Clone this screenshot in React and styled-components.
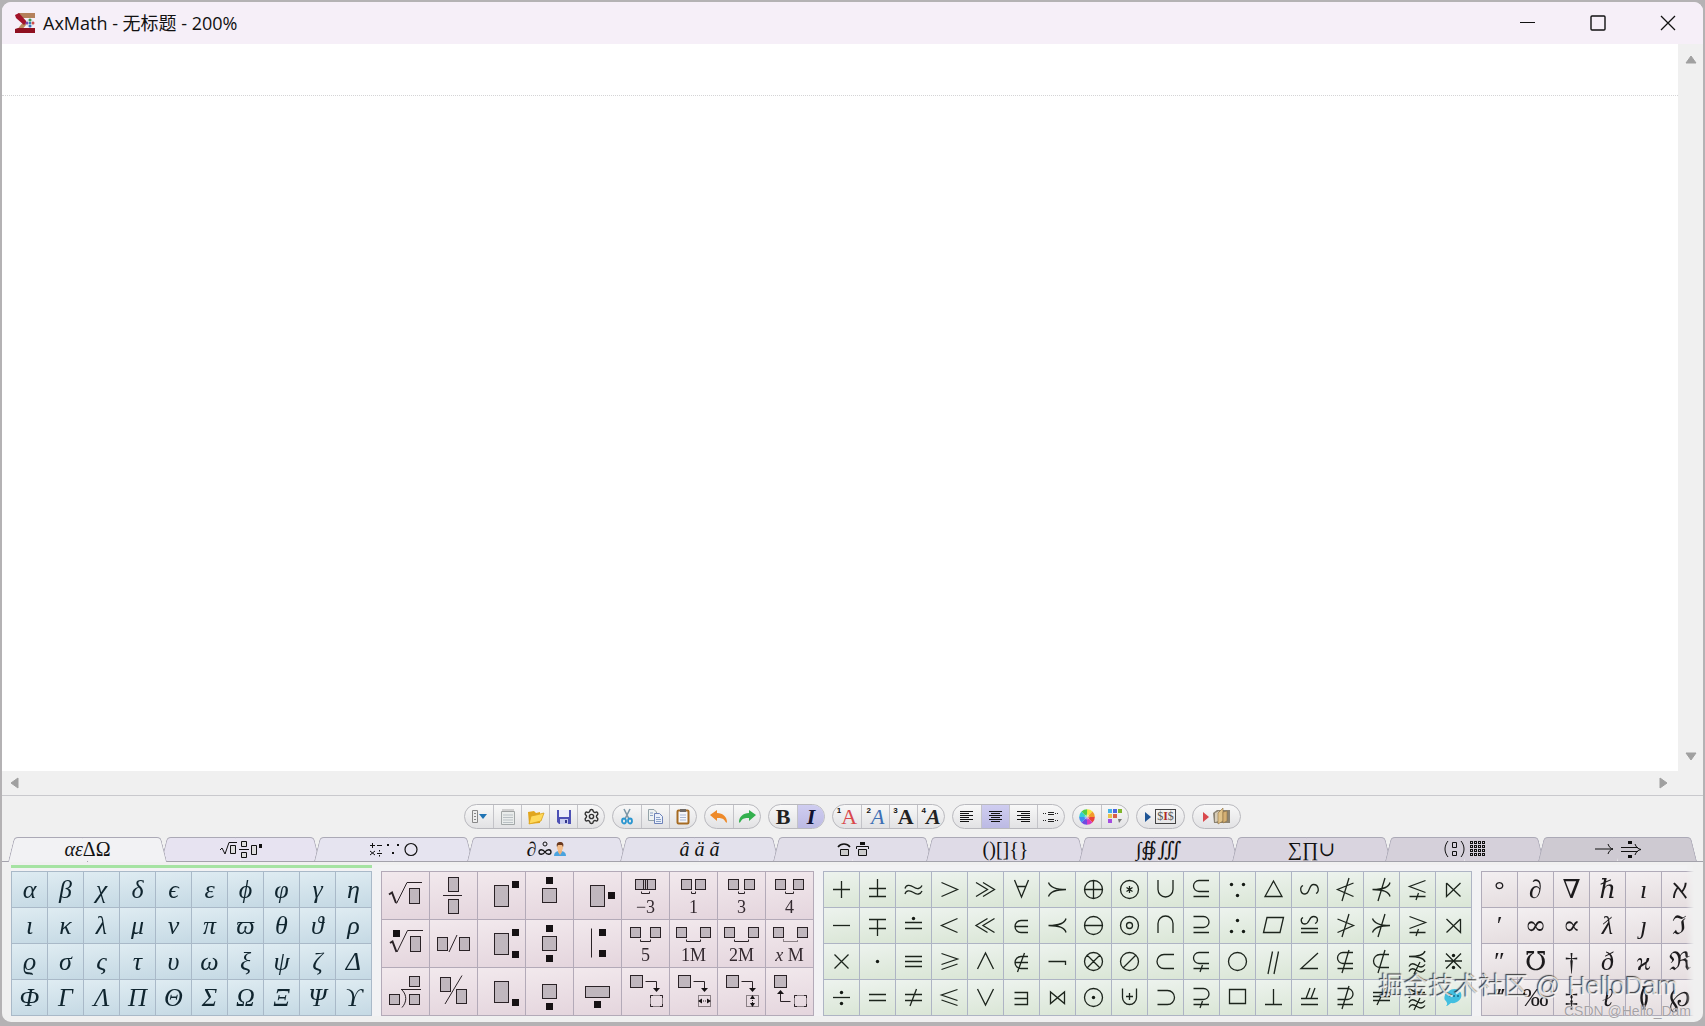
import styled, { createGlobalStyle, css } from "styled-components"
import { Settings } from "lucide-react"

const GlobalStyle = createGlobalStyle`
    * {
        box-sizing: border-box;
    }
    body {
        margin: 0;
        background-color: #b4b2b4;
        font-family: "Open Sans", "Noto Sans CJK SC", sans-serif;
    }
    button {
        border: none;
        padding: 0;
        margin: 0;
        background: none;
        color: inherit;
        font: inherit;
        cursor: pointer;
    }
    svg {
        display: block;
    }
`

const Desktop = styled.div`
    height: 100vh;
    padding: 2px 2px 4px;
`
const Window = styled.div`
    height: 100%;
    position: relative;
    display: flex;
    flex-direction: column;
    overflow: hidden;
    border-radius: 9px;
    background-color: #f0f0f0;
`

/* title bar */
const TitleBar = styled.header`
    height: 42px;
    flex: none;
    display: flex;
    align-items: center;
    justify-content: space-between;
    background-color: #f6eff8;
`
const Title = styled.h1`
    margin: 0;
    padding-left: 13px;
    display: flex;
    align-items: center;
    gap: 8px;
    font-size: 18px;
    font-weight: 400;
    line-height: 24px;
    color: #111;
`
const WindowButtons = styled.div`
    display: flex;
    height: 100%;
`
const WindowButton = styled.button`
    width: 70px;
    display: flex;
    align-items: center;
    justify-content: center;
`

/* editor */
const EditorArea = styled.div`
    flex: 1;
    min-height: 0;
    display: grid;
    grid-template-columns: 1fr 25px;
    grid-template-rows: 1fr 24px;
    border-bottom: 1px solid #c9c9cd;
`
const Sheet = styled.main`
    display: flex;
    flex-direction: column;
    background-color: white;
`
const HeaderLine = styled.div`
    height: 52px;
    flex: none;
    border-bottom: 1px dotted #d4d4d6;
`
const Editor = styled.textarea`
    flex: 1;
    border: none;
    outline: none;
    resize: none;
    padding: 8px;
    background: none;
    font: 28px "Liberation Serif", serif;
`
const VerticalBar = styled.div`
    display: flex;
    flex-direction: column;
    align-items: center;
    justify-content: space-between;
    padding: 10px 0 9px;
`
const HorizontalBar = styled.div`
    display: flex;
    align-items: center;
    justify-content: space-between;
    padding: 0 10px 0 8px;
`

/* toolbar */
const Toolbar = styled.div`
    flex: none;
    display: flex;
    justify-content: center;
    gap: 7px;
    padding: 8px 0;
`
const Group = styled.div`
    height: 25px;
    display: flex;
    overflow: hidden;
    border: 1px solid #b9b9be;
    border-radius: 13px;
    background: linear-gradient(#f8f8f8, #e2e2e4);
`
const Tool = styled.button`
    width: ${(props) => (props.$wide ? 47 : 28)}px;
    display: flex;
    align-items: center;
    justify-content: center;
    background: ${(props) => (props.$on ? "linear-gradient(#cfcdf0, #bcbae4)" : "none")};

    & + & {
        border-left: 1px solid #c3c3c8;
    }
    &:last-child:not(:only-child) {
        width: 27px;
    }
`
const Letter = styled.span`
    display: flex;
    align-items: center;
    font-family: "Liberation Serif", serif;
    font-size: 22px;
    line-height: 23px;
    font-weight: ${(props) => (props.$bold ? 700 : 400)};
    font-style: ${(props) => (props.$italic ? "italic" : "normal")};
    color: ${(props) => props.$color || "#222"};
`
const Index = styled.sup`
    align-self: flex-start;
    font: 700 8px/12px "Liberation Sans", sans-serif;
    color: #111;
`

/* tabs */
const Tabs = styled.div`
    flex: none;
    height: 25px;
    display: flex;
    padding: 0 9px;
    border-bottom: 1px solid #a3a2ab;
`
const half = css`
    content: "";
    position: absolute;
    z-index: -1;
    top: 0;
    bottom: ${(props) => (props.$active ? "-1px" : "0")};
    width: 51%;
    border-top: 1px solid #aba9b6;
    background-color: ${(props) => props.$tone};
`
const Tab = styled.button`
    flex: 1;
    position: relative;
    z-index: ${(props) => (props.$active ? 1 : 0)};
    display: flex;
    align-items: center;
    justify-content: center;
    gap: 2px;
    font-family: "Liberation Serif", "DejaVu Serif", serif;
    font-size: 20px;
    line-height: 24px;
    color: #111;

    &::before {
        ${half}
        left: 0;
        border-left: 1px solid #aba9b6;
        border-top-left-radius: 4px;
        transform: skewX(-14deg);
    }
    &::after {
        ${half}
        right: 0;
        border-right: 1px solid #aba9b6;
        border-top-right-radius: 4px;
        transform: skewX(14deg);
    }
`
const Italic = styled.em`
    font-style: italic;
    white-space: pre;
`

/* symbol palettes */
const PaletteArea = styled.div`
    flex: none;
    margin: 3px 9px 6px;
    overflow: hidden;
    background-color: #f2f2f4;
    mask-image: linear-gradient(to left, transparent, #000 8px);
`
const Marker = styled.div`
    width: 361px;
    height: 3px;
    margin-bottom: 3px;
    background-color: #a5e3a2;
`
const Palettes = styled.div`
    display: flex;
    gap: 9px;
`
const Palette = styled.div`
    flex: none;
    display: grid;
    grid-template-columns: repeat(${(props) => props.$cols}, ${(props) => props.$cell}px);
    grid-auto-rows: ${(props) => props.$cell}px;
    gap: 1px;
    padding: 1px;
    background-color: ${(props) => props.$line};
`
const Cell = styled.button`
    display: flex;
    flex-direction: column;
    align-items: center;
    overflow: hidden;
    background: linear-gradient(170deg, ${(props) => props.$from}, ${(props) => props.$to});
`
const Glyph = styled.span`
    font-family: ${(props) => (props.$wide ? "" : "\"Liberation Serif\", ")}"DejaVu Serif", serif;
    font-size: 26px;
    line-height: 35px;
    font-style: ${(props) => (props.$italic ? "italic" : "normal")};
    color: ${(props) => props.$color || "#10252f"};
`
const SpaceLabel = styled.span`
    font-family: "Liberation Serif", serif;
    font-size: 18px;
    line-height: 23px;
    color: #33292f;
`

const Watermark = styled.div`
    position: absolute;
    right: 12px;
    bottom: 3px;
    display: flex;
    flex-direction: column;
    align-items: flex-end;
    pointer-events: none;
`
const MarkName = styled.span`
    padding-right: 13px;
    font-family: "Liberation Sans", "Noto Sans CJK SC", sans-serif;
    font-size: 25px;
    line-height: 34px;
    color: rgba(255, 255, 255, 0.75);
    text-shadow: -1px -1px 1px rgba(40, 40, 40, 0.9);
`
const MarkSource = styled.span`
    font-family: "Liberation Sans", sans-serif;
    font-size: 14px;
    line-height: 16px;
    color: #a5a2a5;
    text-shadow: 0 0 1px white;
`

const greek = "αβχδϵεϕφγηικλμνπϖθϑρϱσςτυωξψζΔΦΓΛΠΘΣΩΞΨϒ"

const others = [
  "°", "∂", "∇", "ℏ", "ı", "ℵ",
  "′", "∞", "∝", "ƛ", "ȷ", "ℑ",
  "″", "℧", "†", "ð", "ϰ", "ℜ",
  "‴", "‰", "‡", "ℓ", "≬", "℘",
]
const slanted = "∂ℏıƛȷðϰℓ"
const wideGlyphs = "∞∝"

const ring = "M8.5 17.5a9 9 0 1 0 18 0a9 9 0 1 0 -18 0"
const slash = "M14 29L21 6"
const subset = "M25 8.5H15a5.5 5.5 0 0 0 0 11H25"
const superset = "M9.5 8.5H19.5a5.5 5.5 0 0 1 0 11H9.5"
const member = "M24 12.5H17a6 6 0 0 0 0 12H24M11 18.5H24"
const prec = "M26 10.5C25 15 19 17.5 8.5 17.5C19 17.5 25 20 26 24.5"
const succ = "M8.5 10.5C10 15 16 17.5 26 17.5C16 17.5 10 20 8.5 24.5"
const waves = "M9 22.5c2-4 5-3 8-1s6 2 8-1M9 27.5c2-4 5-3 8-1s6 2 8-1"

// every operator is a thin stroke (d) with optional dots, on a 35 x 35 field
const operators = [
  { d: "M9 17.5H26M17.5 9V26" },
  { d: "M17.5 7V24.5M9 16.5H26M9 24.5H26" },
  { d: "M9 16.5c1-4 5-4 8.5-1.5s7 2 8.5-1.5M9 22c1-4 5-4 8.5-1.5s7 2 8.5-1.5" },
  { d: "M9.5 10.5L25.5 17.5L9.5 24.5" },
  { d: "M8 10.5L19.5 17.5L8 24.5M15 10.5L26.5 17.5L15 24.5" },
  { d: "M10.5 8L17.5 25L24.5 8M13 14.5H22" },
  { d: succ },
  { d: ring + "M8.5 17.5H26.5M17.5 8.5V26.5" },
  { d: ring + "M17.5 14V21M14.5 15.5L20.5 19.5M20.5 15.5L14.5 19.5" },
  { d: "M10 8V17.5a7.5 7.5 0 0 0 15 0V8" },
  { d: subset + "M9.5 24.5H25" },
  { dots: [[11, 12], [23, 12], [17, 23]] },
  { d: "M17.5 9L9 24.5H26Z" },
  { d: "M11 13.5C7.500 15 8 22 13 22C18 22 16.5 12.5 21.5 12.5C27 12.5 27.5 20 24 21.5" },
  { d: "M25.5 11L9.5 17.5L25.5 24.5" + slash },
  { d: prec + slash },
  { d: "M25.5 8.5L9.5 14.5L25.5 20.5M9.5 24.5H25.5M16 28L18.5 21" },
  { d: "M10.5 11V24.5L24.5 11M10.5 11L24.5 24.5" },

  { d: "M9 17.5H26" },
  { d: "M9 11.5H26M9 20.5H26M17.5 11.5V28" },
  { d: "M9 14.5H26M9 20.5H26", dots: [[17, 10]] },
  { d: "M25.5 10.5L9.5 17.5L25.5 24.5" },
  { d: "M19.5 10.5L8 17.5L19.5 24.5M26.5 10.5L15 17.5L26.5 24.5" },
  { d: member },
  { d: prec },
  { d: ring + "M8.5 17.5H26.5" },
  { d: ring + "M14.5 17.5a3 3 0 1 0 6 0a3 3 0 1 0 -6 0" },
  { d: "M10 25V15.5a7.5 7.5 0 0 1 15 0V25" },
  { d: superset + "M9.5 24.5H25" },
  { dots: [[17, 12], [11, 23], [23, 23]] },
  { d: "M11 9.5H27.5L24 24.5H7.5Z" },
  { d: "M11 9.5C8 11 9 16 13 16C18 16 16.5 8.5 21.5 8.5C26.5 8.5 26.5 14 23 15.5M9 20.5H26M9 24.5H26" },
  { d: "M9.5 11L25.5 17.5L9.5 24.5" + slash },
  { d: succ + slash },
  { d: "M9.5 8.5L25.5 14.5L9.5 20.5M9.5 24.5H25.5M16 28L18.5 21" },
  { d: "M24.5 11V24.5L10.5 11M24.5 11L10.5 24.5" },

  { d: "M10.5 10.5L24.5 24.5M24.5 10.5L10.5 24.5" },
  { dots: [[17, 17]] },
  { d: "M9 12.5H26M9 17.5H26M9 22.5H26" },
  { d: "M9.5 9.5L25.5 15L9.5 20.5M25.5 20L9.5 25.5" },
  { d: "M9.5 25L17.5 9L25.5 25" },
  { d: member + "M13.5 28L20.5 9" },
  { d: "M8.5 17.5H25.5V21" },
  { d: ring + "M11 11L24 24M24 11L11 24" },
  { d: ring + "M24 11L11 24" },
  { d: "M26 10.5H16a7 7 0 0 0 0 14H26" },
  { d: subset + "M9.5 24.5H25M16 28L18.5 21" },
  { d: ring },
  { d: "M16.5 7.5L12 30M22.5 7.5L18 30" },
  { d: "M26 9L9 24.5H26" },
  { d: subset + "M9.5 24.5H25" + slash },
  { d: "M25 10.5H16a6.5 6.5 0 0 0 0 13H25" + slash },
  { d: "M25 7C24 11 19 12.5 9 12.5C19 12.5 24 14 25 18" + waves + "M14 30L20 18" },
  { d: "M10 9.5L25 24.5M25 9.5L10 24.5M9 17H26", dots: [[17, 11], [17, 23]] },

  { d: "M9 17.5H26", dots: [[17, 12], [17, 23]] },
  { d: "M9 14.5H26M9 20.5H26" },
  { d: "M9 14.5H26M9 20.5H26M14 26L20.5 9" },
  { d: "M25.5 9.5L9.5 15L25.5 20.5M9.5 20L25.5 25.5" },
  { d: "M9.5 9L17.5 25L25.5 9" },
  { d: "M10.5 12.5H23.5V24.5H10.5M10.5 18.5H23.5" },
  { d: "M10.5 12V23.5L24.5 12V23.5Z" },
  { d: ring, dots: [[17, 17]] },
  { d: "M10.5 8.5V17.5a7 7 0 0 0 14 0V8.5M14 16.5H21M17.5 13V20" },
  { d: "M9.5 10.5H19.5a7 7 0 0 1 0 14H9.5" },
  { d: superset + "M9.5 24.5H25M16 28L18.5 21" },
  { d: "M9.5 9.5H25.5V23.5H9.5Z" },
  { d: "M17.5 9V24.5M9 24.5H26" },
  { d: "M9 18.5H26M9 24.5H26M14 18.5L18 8M19 18.5L23 8" },
  { d: superset + "M9.5 24.5H25" + slash },
  { d: "M9 12.5H26M9 16.5H26M9 20.5H26M13 25L21 8" },
  { d: "M9 7C10 11 15 12.5 25 12.5C15 12.5 10 14 9 18" + waves + "M14 30L20 18" },
  { bird: true },
]

const Operator = ({ item }) => (
  <svg width="35" height="35" viewBox="0 0 35 35" fill="none" stroke="#1c241c" strokeWidth="1.3">
    {item.d && <path d={item.d} />}
    {item.dots && item.dots.map(([x, y]) => <circle key={x + "-" + y} cx={x + 0.5} cy={y + 0.5} r="1.7" fill="#141a14" stroke="none" />)}
    {item.bird && (
      <g stroke="none">
        <path d="M9 15C10 11 12 13 13 11C16 8 23 8 25 13C27 19 21 24 15 23C13 24 12 26 10 26C12 24 11 23 10 21C8 20 8 17 9 15Z" fill="#42bfe0" />
        <path d="M13 15h2v2h-2zM17 15h2v2h-2zM21 15h2v2h-2z" fill="#1d7fa0" />
      </g>
    )}
  </svg>
)

// boxes are placeholders, marks are the small filled squares
const templates = [
  { d: "M14.5 31.5L25 10.5H40", thick: "M7 22.5L10 20.5L14 31", boxes: [[27, 16, 10, 15]] },
  { d: "M13 23.5H32", boxes: [[18, 5, 10, 14], [18, 27, 10, 14]] },
  { boxes: [[16, 13, 14, 21]], marks: [[34, 9]] },
  { boxes: [[16, 16, 14, 14]], marks: [[20, 5]] },
  { boxes: [[16, 13, 14, 21]], marks: [[34, 20]] },
  { d: "M21.5 7V17M23.5 7V17M25.5 7V17M19.5 19.5V21.5H27.5V19.5", boxes: [[13, 7, 10, 10], [23, 7, 10, 10]], label: "−3" },
  { gap: [11, 25], label: "1" },
  { gap: [10, 26], label: "3" },
  { gap: [9, 27], label: "4" },

  { d: "M15 32L25.5 10.5H41", thick: "M8 23L10.5 21.5L14.5 32", boxes: [[28, 16, 10, 15]], marks: [[11, 10]] },
  { d: "M19 32L27 15", boxes: [[7, 17, 10, 13], [29, 17, 10, 13]] },
  { boxes: [[16, 13, 14, 21]], marks: [[34, 9], [34, 31]] },
  { boxes: [[16, 16, 14, 14]], marks: [[20, 5], [20, 35]] },
  { d: "M17.5 8.5V37.5", marks: [[25, 9], [25, 30]] },
  { gap: [8, 28], label: "5" },
  { gap: [6, 30], label: "1M" },
  { gap: [6, 30], label: "2M" },
  { gap: [7, 31], dotted: true, label: <><i>x</i> M</> },

  { d: "M19 21.5H39M20 22C25 27 25 34 20 39.5", boxes: [[27, 8, 10, 10], [7, 26, 10, 10], [27, 26, 10, 10]] },
  { d: "M15 36L32 7.5", boxes: [[10, 9, 10, 14], [26, 21, 10, 14]] },
  { boxes: [[16, 13, 14, 21]], marks: [[34, 31]] },
  { boxes: [[16, 16, 14, 14]], marks: [[20, 35]] },
  { boxes: [[11, 18, 24, 11]], marks: [[20, 33]] },
  { d: "M23.5 13.5H34.5V20", boxes: [[8, 7, 12, 12]], ghost: true, head: "M31 20H38L34.5 24Z" },
  { d: "M23.5 13.5H34.5V20", boxes: [[8, 7, 12, 12]], ghost: true, head: "M31 20H38L34.5 24ZM28 33L32 30.5V35.5ZM41 33L37 30.5V35.5Z", inner: "M31 33H38" },
  { d: "M23.5 13.5H34.5V20", boxes: [[8, 7, 12, 12]], ghost: true, head: "M31 20H38L34.5 24ZM34.5 27L32 31H37ZM34.5 39L32 35H37Z", inner: "M34.5 30V36" },
  { d: "M24.5 33.5H14.5V26", boxes: [[8, 7, 12, 12]], ghost: true, head: "M11 26H18L14.5 22Z" },
]

const Template = ({ item }) => {
  const boxes = item.gap ? item.gap.map((x) => [x, 7, 10, 10]) : item.boxes || []
  const height = item.label ? 24 : 47
  return (
    <svg width="47" height={height} viewBox={`0 0 47 ${height}`} fill="none" stroke="#2a2226" strokeWidth="1">
      {boxes.map(([x, y, w, h]) => (
        <rect key={x + "-" + y} x={x + 0.5} y={y + 0.5} width={w} height={h} fill="#c0b7be" />
      ))}
      {item.d && <path d={item.d} />}
      {item.thick && <path d={item.thick} strokeWidth="2" />}
      {item.gap && (
        <path
          d={`M${item.gap[0] + 10.5} 19.5V21.5H${item.gap[1] + 0.5}V19.5`}
          strokeDasharray={item.dotted ? "1 1" : undefined}
        />
      )}
      {item.marks && item.marks.map(([x, y]) => <rect key={y} x={x} y={y} width="7" height="7" fill="#161214" stroke="none" />)}
      {item.ghost && <rect x="28.5" y="27.5" width="12" height="11" strokeDasharray="1 1" />}
      {item.ghost && !item.inner && <path d="M28.5 30V27.5H31M38 27.5H40.5V30M40.5 36V38.5H38M31 38.5H28.5V36" />}
      {item.inner && <path d={item.inner} strokeDasharray="1 1" />}
      {item.head && <path d={item.head} fill="#161214" stroke="none" />}
    </svg>
  )
}

const Arrow = ({ d, w = 12, h = 12 }) => (
  <svg width={w} height={h} viewBox={`0 0 ${w} ${h}`}>
    <path d={d} fill="#a0a0a0" stroke="#a0a0a0" strokeLinejoin="round" />
  </svg>
)

const Logo = () => (
  <svg width="20" height="20" viewBox="0 0 20 20">
    <path d="M3 0H20V5H6Z" fill="#b5805c" />
    <path d="M5 16L11 9" stroke="#b98a5e" strokeWidth="4" />
    <path d="M0 2L4 0L12 9L9 12L1 5Z" fill="#a3122a" />
    <path d="M0 16L3 15H20V20H0Z" fill="#8f1020" />
    <circle cx="15" cy="10" r="4" fill="#dfe6ea" />
    <circle cx="15" cy="7" r="1.5" fill="#3c9a54" />
    <circle cx="18" cy="10" r="1.5" fill="#d04a4a" />
    <circle cx="15" cy="13" r="1.5" fill="#3b6fc0" />
    <circle cx="12" cy="10" r="1.5" fill="#7a4ab0" />
    <circle cx="15" cy="10" r="1.2" fill="#2b7fae" />
  </svg>
)

const ListIcon = () => (
  <svg width="18" height="15" viewBox="0 0 18 15">
    <path d="M2.5 1.5H7.5V13.5H2.5Z" fill="#eee" stroke="#888" />
    <path d="M4 4.5H6M4 7.5H6M4 10.5H6" stroke="#888" />
    <path d="M9 5H17L13 10Z" fill="#1f73b4" />
  </svg>
)
const NoteIcon = () => (
  <svg width="16" height="18" viewBox="0 0 16 18">
    <path d="M1.5 3.5H14.5V16.5H1.5Z" fill="#e9eceb" stroke="#a3a8a8" />
    <path d="M3 1V4M5 1V4M7 1V4M9 1V4M11 1V4M13 1V4" stroke="#999" strokeWidth=".8" />
    <path d="M3 7H13M3 9.5H13M3 12H13M3 14.5H13" stroke="#b9c0c4" />
  </svg>
)
const FolderIcon = () => (
  <svg width="18" height="16" viewBox="0 0 18 16">
    <path d="M1 3L7 2L9 4L13 3V14L2 15Z" fill="#e2a61d" />
    <path d="M4 7L9 6L17 4L14 12L2 15Z" fill="#ffd95a" stroke="#d9a11c" strokeWidth=".8" />
  </svg>
)
const SaveIcon = () => (
  <svg width="16" height="16" viewBox="0 0 16 16">
    <path d="M1 1H15V15H3L1 13Z" fill="#4d51b5" />
    <path d="M3 1H13V8H3Z" fill="#eceefa" />
    <path d="M4 10H12V15H4Z" fill="#c9cdee" />
    <path d="M9 11H11V14H9Z" fill="#33378a" />
  </svg>
)
const CutIcon = () => (
  <svg width="14" height="17" viewBox="0 0 14 17" fill="none">
    <path d="M4 1L9 11M10 1L5 11" stroke="#7d98a8" strokeWidth="1.6" />
    <ellipse cx="4" cy="13" rx="2" ry="2.5" stroke="#2b96d0" strokeWidth="1.8" />
    <ellipse cx="10" cy="13" rx="2" ry="2.5" stroke="#2b96d0" strokeWidth="1.8" />
  </svg>
)
const CopyIcon = () => (
  <svg width="17" height="17" viewBox="0 0 17 17">
    <path d="M1.5 1.5H7L9.5 4V12.5H1.5Z" fill="#eef2f2" stroke="#94a3a8" />
    <path d="M7.5 5.5H12.5L15.5 8.5V15.5H7.5Z" fill="#eaf0fa" stroke="#6e82b8" />
    <path d="M3 5H6M3 7.5H6M9 9.5H13M9 11.5H14M9 13.5H14" stroke="#8ba2c8" />
  </svg>
)
const PasteIcon = () => (
  <svg width="14" height="17" viewBox="0 0 14 17">
    <rect x="1.5" y="2.5" width="11" height="13" rx="1" fill="#f4f6fa" stroke="#a66b22" strokeWidth="2" />
    <path d="M4 1H10V4H4Z" fill="#6f6a66" />
    <path d="M4 7H10M4 9.5H10M4 12H10" stroke="#a9b7d2" />
  </svg>
)
const Bend = ({ color, flip }) => (
  <svg width="20" height="16" viewBox="0 0 20 16">
    <path
      d="M1 6L8 1V4C14 4 18 8 18 13C18 14 17 14 16 12C14 9 12 9 8 9V12Z"
      fill={color}
      transform={flip ? "translate(20 0) scale(-1 1)" : undefined}
    />
  </svg>
)
const Lines = ({ rows }) => (
  <svg width="14" height="11" viewBox="0 0 14 11">
    {rows.map(([x, w], i) => <rect key={i} x={x} y={i * 2} width={w} height="1" fill="#111" />)}
  </svg>
)
const SpreadIcon = () => (
  <svg width="16" height="12" viewBox="0 0 16 12" stroke="#222" fill="none">
    <path d="M5 1.5H11M5 3.5H11M5 8.5H11M5 10.5H11" />
    <path d="M0 2.5H4M12 2.5H16M0 9.5H4M12 9.5H16" strokeDasharray="1 1" />
  </svg>
)
const wheel = ["#f2e53a", "#f39a2a", "#e8433a", "#d63cc0", "#6f4be0", "#3f8cf0", "#34cfd0", "#4fcf45"]
const WheelIcon = () => (
  <svg width="16" height="16" viewBox="-8 -8 16 16">
    {wheel.map((color, i) => (
      <path key={color} d="M0 0L0 -7.8A7.8 7.8 0 0 1 5.6 -5.5Z" fill={color} transform={`rotate(${i * 45})`} />
    ))}
    <circle r="2.5" fill="#fff" opacity=".4" />
  </svg>
)
const SwatchIcon = () => (
  <svg width="15" height="15" viewBox="0 0 15 15">
    <path d="M0 0H4V4H0Z" fill="#45b4e8" />
    <path d="M5 0H9V4H5Z" fill="#4a66e0" />
    <path d="M10 0H14V4H10Z" fill="#7fb52a" />
    <path d="M0 5H4V9H0Z" fill="#e8c34a" />
    <path d="M5 5H9V9H5Z" fill="#d8604a" />
    <path d="M0 10H4V14H0Z" fill="#a54be0" />
    <path d="M10 10H14L11 14Z" fill="#777" />
  </svg>
)
const Play = ({ color }) => (
  <svg width="6" height="12" viewBox="0 0 6 12">
    <path d="M0 1L6 6L0 11Z" fill={color} />
  </svg>
)
const BookIcon = () => (
  <svg width="22" height="17" viewBox="0 0 22 17">
    <path d="M4 5L8 2H21V15H5Z" fill="#8b8373" />
    <path d="M6 5L10 3V13L6 14Z" fill="#d8cdb8" />
    <path d="M9 5L14 0V13L9 16Z" fill="#e2c48a" stroke="#8f7040" strokeWidth=".6" />
    <path d="M14 4L18 3V13L14 15Z" fill="#d4b074" stroke="#8f7040" strokeWidth=".6" />
  </svg>
)
const Code = styled.span`
    margin-left: 4px;
    padding: 0 1px;
    border: 1px solid #444;
    font: 12px/13px "Liberation Serif", serif;
    color: #555;
`
const Cursor = styled.b`
    color: #b02a2a;
`

/* drawings on the tabs */
const RootTabIcon = () => (
  <svg width="44" height="18" viewBox="0 0 44 18" fill="#ddd" stroke="#111">
    <path d="M1 10L3 8L6 14L10 2.5H18" fill="none" />
    <path d="M11.5 5.5H16.5V13.5H11.5ZM22.5 1.5H27.5V6.5H22.5ZM22.5 12.5H27.5V17.5H22.5ZM32.5 5.5H37.5V14.5H32.5Z" />
    <path d="M20 9.5H30" />
    <path d="M40 4H43V8H40Z" fill="#111" stroke="none" />
  </svg>
)
const SignsTabIcon = () => (
  <svg width="48" height="15" viewBox="0 0 48 15" fill="none" stroke="#111">
    <path d="M0 3.5H5M2.5 1V6M7 3.5H12M0 9L5 13M5 9L0 13M7 11.5H12" />
    <path d="M9 8h1v1.5h-1zM9 13h1v1.5h-1zM17 2h2v2h-2zM27 2h2v2h-2zM22 10h2v2h-2z" fill="#111" stroke="none" />
    <circle cx="41" cy="7.5" r="6" strokeWidth="1.2" />
  </svg>
)
const PersonTabIcon = () => (
  <svg width="12" height="14" viewBox="0 0 12 14">
    <path d="M0 14C0 10 3 9 6 9C9 9 12 10 12 14Z" fill="#4aa3df" />
    <path d="M4 7H8V10L6 13L4 10Z" fill="#f0b27a" />
    <ellipse cx="6" cy="5" rx="3" ry="4" fill="#f3bd8a" />
    <path d="M3 5C2 1 4 0 6 0C9 0 10 2 9 5L8 3H4Z" fill="#6b3a1f" />
  </svg>
)
const LoopTabIcon = () => (
  <svg width="14" height="16" viewBox="0 0 14 16" fill="none" stroke="#111">
    <circle cx="7" cy="3" r="2" />
    <path d="M7 11C5 8 1 8 1 11C1 14 5 14 7 11C9 8 13 8 13 11C13 14 9 14 7 11Z" strokeWidth="1.3" />
  </svg>
)
const CoverTabIcon = () => (
  <svg width="32" height="17" viewBox="0 0 32 17" fill="#ccc" stroke="#111">
    <path d="M1 6C4 2 10 2 13 6" fill="none" strokeWidth="1.5" />
    <path d="M3.5 8.5H11.5V14.5H3.5ZM21.5 8.5H29.5V14.5H21.5Z" />
    <path d="M19.5 8V5.5H31.5V8" fill="none" />
    <path d="M23 1H28V4H23Z" fill="#111" stroke="none" />
  </svg>
)
const MatrixTabIcon = () => (
  <svg width="42" height="18" viewBox="0 0 42 18" fill="none" stroke="#111">
    <path d="M4 1C0 6 0 12 4 17M17 1C21 6 21 12 17 17" />
    <path d="M8.5 2.5H12.5V7.5H8.5ZM8.5 11.5H12.5V15.5H8.5Z" />
    {[0, 4, 8, 12].map((y) => [0, 4, 8, 12].map((x) => (
      <rect key={x + "-" + y} x={26.5 + x} y={1.5 + y} width="2" height="2" />
    )))}
  </svg>
)
const ArrowsTabIcon = () => (
  <svg width="48" height="18" viewBox="0 0 48 18" fill="none" stroke="#111">
    <path d="M1 9H19M14 4C15 7 17 9 19 9C17 9 15 11 14 14" />
    <path d="M27 7.5H44M27 11.5H44M41 4C42 7 44 9 47 9.5C44 10 42 12 41 15" />
    <path d="M34 1H38V4H34ZM34 15H38V18H34Z" fill="#111" stroke="none" />
  </svg>
)

const tabs = [
  { name: "Greek letters", tone: "#f2f2f4", icon: <span><Italic>αε</Italic>ΔΩ</span> },
  { name: "Roots and fractions", tone: "#e7e3f1", icon: <RootTabIcon /> },
  { name: "Operators", tone: "#e6e4f0", icon: <SignsTabIcon /> },
  { name: "Other symbols", tone: "#e4e2ed", icon: <><Italic>∂</Italic><LoopTabIcon /><PersonTabIcon /></> },
  { name: "Accents", tone: "#e3e1ec", icon: <Italic>â ä ã</Italic> },
  { name: "Covers", tone: "#e1dee9", icon: <CoverTabIcon /> },
  { name: "Brackets", tone: "#dfdbe7", icon: "()[]{}" },
  { name: "Integrals", tone: "#dcd8e3", icon: "∫∯∭" },
  { name: "Big operators", tone: "#d9d4df", icon: "∑∏∪" },
  { name: "Matrices", tone: "#d5d0da", icon: <MatrixTabIcon /> },
  { name: "Arrows", tone: "#cecad2", icon: <ArrowsTabIcon /> },
]

const long = 13
const alignLeft = [[0, long], [0, 9], [0, long], [0, 9], [0, long], [0, 9]]
const alignCenter = [[0, long], [2, 9], [0, long], [2, 9], [0, long], [2, 9]]
const alignRight = [[0, long], [4, 9], [0, long], [4, 9], [0, long], [4, 9]]

const groups = [
  [
    { name: "Menu", icon: <ListIcon /> },
    { name: "New", icon: <NoteIcon /> },
    { name: "Open", icon: <FolderIcon /> },
    { name: "Save", icon: <SaveIcon /> },
    { name: "Settings", icon: <Settings size={17} color="#333" strokeWidth={2} /> },
  ],
  [
    { name: "Cut", icon: <CutIcon /> },
    { name: "Copy", icon: <CopyIcon /> },
    { name: "Paste", icon: <PasteIcon /> },
  ],
  [
    { name: "Undo", icon: <Bend color="#ee8a2a" /> },
    { name: "Redo", icon: <Bend color="#33b04e" flip /> },
  ],
  [
    { name: "Bold", icon: <Letter $bold>B</Letter> },
    { name: "Italic", on: true, icon: <Letter $bold $italic $color="#111130">I</Letter> },
  ],
  [
    { name: "Style 1", icon: <Letter $color="#d9484c"><Index>1</Index>A</Letter> },
    { name: "Style 2", icon: <Letter $italic $color="#3d6fb5"><Index>2</Index>A</Letter> },
    { name: "Style 3", icon: <Letter $bold><Index>3</Index>A</Letter> },
    { name: "Style 4", icon: <Letter $bold $italic><Index>4</Index>A</Letter> },
  ],
  [
    { name: "Align left", icon: <Lines rows={alignLeft} /> },
    { name: "Align center", on: true, icon: <Lines rows={alignCenter} /> },
    { name: "Align right", icon: <Lines rows={alignRight} /> },
    { name: "Align at sign", icon: <SpreadIcon /> },
  ],
  [
    { name: "Color", icon: <WheelIcon /> },
    { name: "Swatches", icon: <SwatchIcon /> },
  ],
  [{ name: "LaTeX", wide: true, icon: <><Play color="#1f5596" /><Code>$<Cursor>I</Cursor>$</Code></> }],
  [{ name: "Library", wide: true, icon: <><Play color="#d9484c" /><BookIcon /></> }],
]

const App = () => {
  return (
    <Desktop>
      <GlobalStyle />
      <Window>
        <TitleBar>
          <Title><Logo />AxMath - 无标题 - 200%</Title>
          <WindowButtons>
            <WindowButton aria-label="Minimize">
              <svg width="16" height="16" stroke="#111" fill="none"><path d="M0 7.5H15" /></svg>
            </WindowButton>
            <WindowButton aria-label="Maximize">
              <svg width="16" height="16" stroke="#111" fill="none" strokeWidth="1.4"><rect x="1" y="1" width="14" height="14" rx="1" /></svg>
            </WindowButton>
            <WindowButton aria-label="Close">
              <svg width="16" height="16" stroke="#111" fill="none" strokeWidth="1.3"><path d="M1 1L15 15M15 1L1 15" /></svg>
            </WindowButton>
          </WindowButtons>
        </TitleBar>

        <EditorArea>
          <Sheet>
            <HeaderLine />
            <Editor aria-label="Formula" spellCheck={false} />
          </Sheet>
          <VerticalBar>
            <Arrow w={12} h={10} d="M6 2L11 9H1Z" />
            <Arrow w={12} h={10} d="M1 1H11L6 8Z" />
          </VerticalBar>
          <HorizontalBar>
            <Arrow w={10} h={12} d="M1 6L8 1V11Z" />
            <Arrow w={10} h={12} d="M2 1L9 6L2 11Z" />
          </HorizontalBar>
        </EditorArea>

        <Toolbar>
          {groups.map((group) => (
            <Group key={group[0].name}>
              {group.map((tool) => (
                <Tool key={tool.name} aria-label={tool.name} $on={tool.on} $wide={tool.wide}>{tool.icon}</Tool>
              ))}
            </Group>
          ))}
        </Toolbar>

        <Tabs role="tablist">
          {tabs.map((tab, i) => (
            <Tab key={tab.name} role="tab" aria-label={tab.name} aria-selected={i === 0} $active={i === 0} $tone={tab.tone}>
              {tab.icon}
            </Tab>
          ))}
        </Tabs>

        <PaletteArea>
          <Marker />
          <Palettes>
            <Palette $cols={10} $cell={35} $line="#a9b9c8">
              {[...greek].map((letter) => (
                <Cell key={letter} $from="#dfecf2" $to="#c5d9e4"><Glyph $italic>{letter}</Glyph></Cell>
              ))}
            </Palette>
            <Palette $cols={9} $cell={47} $line="#b3aab8">
              {templates.map((item, i) => (
                <Cell key={i} $from="#f2e9ed" $to="#e4d5dd">
                  <Template item={item} />
                  {item.label && <SpaceLabel>{item.label}</SpaceLabel>}
                </Cell>
              ))}
            </Palette>
            <Palette $cols={18} $cell={35} $line="#aeb4c4">
              {operators.map((item, i) => (
                <Cell key={i} $from="#edf3ee" $to="#dae6d6"><Operator item={item} /></Cell>
              ))}
            </Palette>
            <Palette $cols={6} $cell={35} $line="#b0abb9">
              {others.map((letter) => (
                <Cell key={letter} $from="#f3eff1" $to="#e5dddf">
                  <Glyph $color="#1c1a1c" $italic={slanted.includes(letter)} $wide={wideGlyphs.includes(letter)}>{letter}</Glyph>
                </Cell>
              ))}
            </Palette>
          </Palettes>
        </PaletteArea>

        <Watermark>
          <MarkName>掘金技术社区 @ HelloDam</MarkName>
          <MarkSource>CSDN @Hello_Dam</MarkSource>
        </Watermark>
      </Window>
    </Desktop>
  )
}

export default App
